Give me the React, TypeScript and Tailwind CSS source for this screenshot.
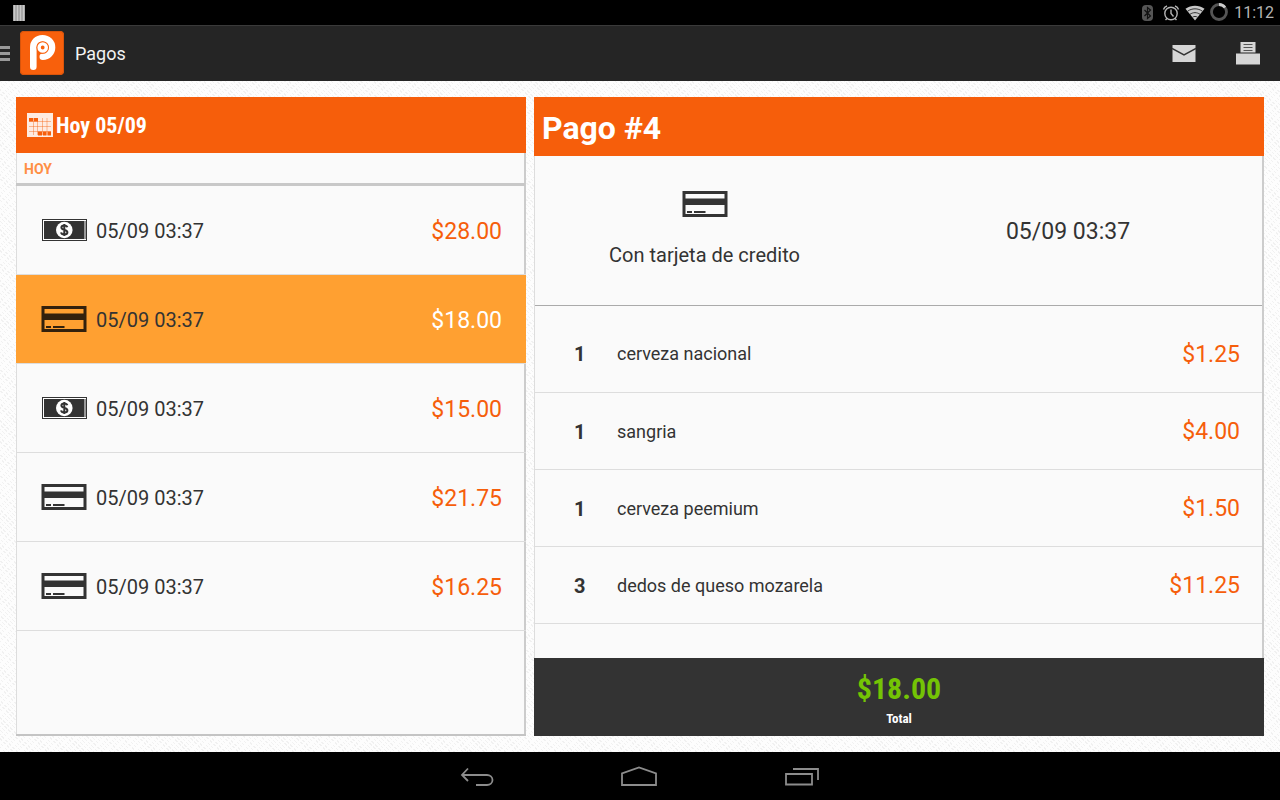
import React, { useState } from 'react';

type Method = 'cash' | 'card';

interface Payment {
  id: number;
  method: Method;
  date: string;
  amount: string;
}

interface Item {
  qty: number;
  name: string;
  price: string;
}

const payments: Payment[] = [
  { id: 5, method: 'cash', date: '05/09 03:37', amount: '$28.00' },
  { id: 4, method: 'card', date: '05/09 03:37', amount: '$18.00' },
  { id: 3, method: 'cash', date: '05/09 03:37', amount: '$15.00' },
  { id: 2, method: 'card', date: '05/09 03:37', amount: '$21.75' },
  { id: 1, method: 'card', date: '05/09 03:37', amount: '$16.25' },
];

const items: Item[] = [
  { qty: 1, name: 'cerveza nacional', price: '$1.25' },
  { qty: 1, name: 'sangria', price: '$4.00' },
  { qty: 1, name: 'cerveza peemium', price: '$1.50' },
  { qty: 3, name: 'dedos de queso mozarela', price: '$11.25' },
];

const CardIcon = () => (
  <svg width="46" height="28" viewBox="0 0 46 28" fill="none" aria-hidden="true">
    <rect x="2" y="2.5" width="42" height="23" stroke="currentColor" strokeWidth="3" />
    <rect x="1" y="8.500" width="44" height="6.500" fill="currentColor" />
    <path d="M5 22h5M12 22h11.500" stroke="currentColor" strokeWidth="1.800" />
  </svg>
);

const CashIcon = () => (
  <svg width="46" height="28" viewBox="0 0 46 28" aria-hidden="true">
    <rect x="1" y="3" width="45" height="22" fill="currentColor" />
    <rect x="2.500" y="4.500" width="42" height="19" fill="none" stroke="#fff" />
    <rect x="43" y="5" width="2" height="18" fill="#999" />
    <circle cx="23.300" cy="14" r="8.300" fill="#fff" />
    <path
      d="M26.300 11.300c-.3-1.200-1.400-1.900-3-1.900-1.700 0-2.900.8-2.900 2.200 0 3.100 6 1.500 6 4.700 0 1.500-1.300 2.300-3.100 2.300-1.800 0-3-.8-3.200-2.200M23.300 8v12"
      fill="none"
      stroke="currentColor"
      strokeWidth="2"
    />
  </svg>
);

const LogoIcon = () => (
  <svg width="44" height="44" viewBox="0 0 44 44" fill="none" aria-hidden="true">
    <rect width="44" height="44" rx="4" fill="#f8600c" />
    <rect x="0.500" y="0.500" width="43" height="43" rx="3.500" stroke="#d9540b" />
    <path
      d="M13.300 35.800V16.500C13.300 11 17 7.200 22.500 7.200S32 11.300 32 16.400s-4 9.300-9.200 9.300"
      stroke="#fff"
      strokeWidth="6.600"
      strokeLinecap="round"
    />
    <circle cx="22.700" cy="16.500" r="6.300" fill="#f8600c" />
    <circle cx="22.700" cy="16.500" r="3.600" stroke="#fff" strokeWidth="3.400" />
  </svg>
);

const CalendarIcon = () => (
  <svg width="26" height="24" viewBox="0 0 26 24" aria-hidden="true">
    <rect width="26" height="24" fill="#fff" fillOpacity="0.880" />
    <path
      d="M2 8.500h22M2 13.500h22M2 18.500h22M6.500 5v17M10.500 5v17M15.500 5v17M20 5v17"
      stroke="#f65e0b"
      strokeOpacity="0.400"
    />
    <path d="M2 5h4v3.500H2zM7 5h4v3.500H7zM11 18.500h4v4h-4zM16 18.500h3.500v4H16zM20.500 18.500H24v4h-3.500z" fill="#f65e0b" />
  </svg>
);

const StatusBar = () => (
  <div className="flex h-[25px] items-center justify-between bg-black pl-3 pr-1.5 text-[#b4b4b4]">
    <svg width="13" height="16" viewBox="0 0 13 16" aria-hidden="true">
      <path d="M1 0h12v16H1z" fill="#888" />
      <path d="M2.500 0v16M5.500 0v16M8.500 0v16M11.500 0v16" stroke="#c8c8c8" strokeWidth="2" />
    </svg>
    <div className="flex items-center">
      <svg width="92" height="24" viewBox="0 0 92 24" fill="none" aria-hidden="true">
        <rect x="6" y="4" width="11" height="16" rx="4" fill="#555" />
        <path d="M8.500 9l6 6-3 2.500v-11l3 2.500-6 6" stroke="#111" strokeWidth="1.200" />
        <circle cx="35" cy="12.500" r="6.200" stroke="currentColor" strokeWidth="1.400" />
        <path d="M35 8.500v4l2.500 3M27.500 8.500c.5-1.800 1.700-3 3.500-3.500M42.500 8.500C42 6.700 40.800 5.500 39 5M31 17.500l-1.500 1.500M39 17.500l1.500 1.500" stroke="currentColor" strokeWidth="1.400" />
        <path d="M59 19.500L49.500 7.800C55 3.700 63 3.700 68.500 7.800z" fill="#c8c8c8" />
        <path d="M51.500 10.300c4.500-3.300 10.500-3.300 15 0M54 13.300c3-2.200 7-2.200 10 0M56.500 16.200c1.500-1 3.500-1 5 0" stroke="#333" strokeWidth="1" />
        <circle cx="83" cy="11" r="7.500" stroke="#555" strokeWidth="2.800" />
        <path d="M83 3.500a7.500 7.500 0 0 1 6 3" stroke="#ccc" strokeWidth="2.800" />
      </svg>
      <span className="ml-1.5 text-base leading-6">11:12</span>
    </div>
  </div>
);

const ActionBar = () => (
  <header className="flex h-14 items-center justify-between border-t border-[#3a3a3a] bg-[#252525] shadow-[0_1px_1px_#888]">
    <div className="flex items-center">
      <button type="button" aria-label="Menú" className="flex items-center gap-2.5 pb-0.5">
        <svg width="10" height="16" viewBox="0 0 10 16" aria-hidden="true">
          <path d="M0 2.500h10M0 8.500h10M0 14.500h10" stroke="#999" strokeWidth="3" />
        </svg>
        <LogoIcon />
      </button>
      <h1 className="ml-[11px] text-lg text-[#f3f3f3]">Pagos</h1>
    </div>
    <div className="flex items-center gap-10 pr-5">
      <button type="button" aria-label="Enviar por correo">
        <svg width="24" height="24" viewBox="0 0 24 24" fill="none" aria-hidden="true">
          <path d="M0.500 3h23v17h-23z" fill="#d6d6d6" />
          <path d="M0 6.500l12 6.500 12-6.500" stroke="#333" strokeWidth="1.500" />
        </svg>
      </button>
      <button type="button" aria-label="Imprimir">
        <svg width="24" height="24" viewBox="0 0 24 24" fill="none" aria-hidden="true">
          <path d="M4.500 0h15v10.500h-15zM0 11.500h24v11H0z" fill="#d6d6d6" />
          <path d="M7.500 2.500h9M7.500 5.500h9M7.500 8.500h9" stroke="#555" strokeWidth="1.200" />
        </svg>
      </button>
    </div>
  </header>
);

const NavBar = () => (
  <nav className="flex h-12 items-center justify-center gap-[125px] bg-black pb-0.5 text-[#8c8c8c]">
    <button type="button" aria-label="Atrás">
      <svg width="36" height="24" viewBox="0 0 36 24" fill="none" stroke="currentColor" strokeWidth="1.800" aria-hidden="true">
        <path d="M9 5.500L3 12l6 6M3 12h25c3 0 5.500 2 5.500 5s-2.500 5-5.500 5H17" />
      </svg>
    </button>
    <button type="button" aria-label="Inicio">
      <svg width="40" height="24" viewBox="0 0 40 24" fill="none" stroke="currentColor" strokeWidth="1.800" aria-hidden="true">
        <path d="M2 22V10.500L19 4.500l17 6V22z" />
      </svg>
    </button>
    <button type="button" aria-label="Recientes">
      <svg width="36" height="24" viewBox="0 0 36 24" fill="none" stroke="currentColor" strokeWidth="1.800" aria-hidden="true">
        <path d="M1 11h26v10.500H1zM8 6h25v11" />
      </svg>
    </button>
  </nav>
);

const App: React.FC = () => {
  const [selected, setSelected] = useState(4);

  return (
    <div className="flex min-h-screen flex-col font-[Roboto,sans-serif] text-[#333]">
      <StatusBar />
      <ActionBar />
      <main className="grid flex-1 grid-cols-[51fr_73fr] gap-2 bg-[#fdfdfd] bg-[repeating-linear-gradient(-45deg,#fdfdfd_0_2px,transparent_2px_5px),repeating-linear-gradient(45deg,#f1f1f1_0_1px,transparent_1px_3px)] p-4">
        <section className="flex flex-col border-b-2 border-[#c4c4c4] bg-[#fafafa]">
          <h2 className="flex h-14 items-center gap-[3px] bg-[#f65e0b] pl-[11px] font-['Roboto_Condensed',Roboto,sans-serif] text-[22px] font-bold text-white">
            <CalendarIcon />
            Hoy 05/09
          </h2>
          <div className="flex-1 border-l border-r-2 border-l-[#ddd] border-r-[#ccc]">
            <h3 className="-mx-px flex h-[33px] items-center border-b-3 border-[#c8c8c8] pl-2 pt-0.5 text-sm font-bold text-[#ff8f45]">
              HOY
            </h3>
            <ul>
              {payments.map((payment) => {
                const active = payment.id === selected;
                return (
                  <li key={payment.id}>
                    <button
                      type="button"
                      onClick={() => setSelected(payment.id)}
                      className={
                        active
                          ? '-ml-px flex h-[89px] w-[calc(100%+3px)] items-center border-b border-[#ddd] bg-[#ffa031] pl-[25px] pr-6'
                          : '-ml-px flex h-[89px] w-[calc(100%+3px)] items-center border-b border-[#ddd] pl-[25px] pr-6'
                      }
                    >
                      <span className={active ? 'text-[#33210d]' : 'text-[#333]'}>
                        {payment.method === 'card' ? <CardIcon /> : <CashIcon />}
                      </span>
                      <span className="ml-[9px] pt-0.5 text-xl">{payment.date}</span>
                      <span
                        className={
                          active
                            ? 'ml-auto pt-1 text-[23px] text-white'
                            : 'ml-auto pt-1 text-[23px] text-[#f65e0b]'
                        }
                      >
                        {payment.amount}
                      </span>
                    </button>
                  </li>
                );
              })}
            </ul>
          </div>
        </section>

        <section className="flex flex-col bg-[#fafafa]">
          <h2 className="flex h-[59px] items-center bg-[#f65e0b] pl-2 pt-0.5 text-[32px] font-bold text-white">Pago #4</h2>
          <div className="flex flex-1 flex-col border-l border-r-2 border-l-[#ddd] border-r-[#ccc]">
            <div className="grid h-[150px] grid-cols-[339fr_388fr] items-center border-b border-[#aaa]">
              <div className="flex flex-col items-center gap-[23px] pb-[3px]">
                <CardIcon />
                <span className="text-xl">Con tarjeta de credito</span>
              </div>
              <span className="pt-1 text-center text-[23px]">05/09 03:37</span>
            </div>
            <table className="mt-[9px] w-full">
              <tbody>
                {items.map((item) => (
                  <tr key={item.name} className="h-[77px] border-b border-[#ddd]">
                    <td className="w-[82px] pl-[39px] pt-0.5 text-xl font-bold">{item.qty}</td>
                    <td className="pt-0.5 text-lg">{item.name}</td>
                    <td className="pr-[22px] pt-1 text-right text-[23px] text-[#f65e0b]">{item.price}</td>
                  </tr>
                ))}
              </tbody>
            </table>
          </div>
          <footer className="flex h-[78px] flex-col items-center justify-center bg-[#333] pt-2 font-['Roboto_Condensed',Roboto,sans-serif] font-bold">
            <span className="text-[30px] leading-9 text-[#74c405]">$18.00</span>
            <span className="text-[13px] leading-6 text-white">Total</span>
          </footer>
        </section>
      </main>
      <NavBar />
    </div>
  );
};

export default App;
